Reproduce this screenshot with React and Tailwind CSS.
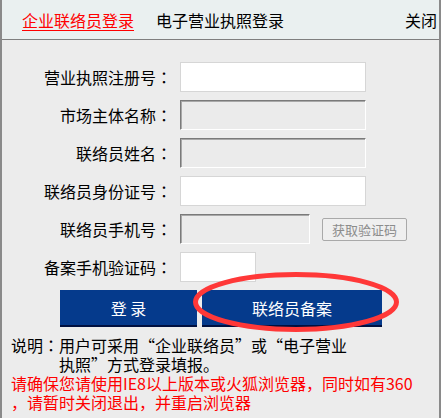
import React from "react";

const font = { fontFamily: '"Noto Sans CJK SC", "Liberation Sans", sans-serif' };
const colonFont = { fontFamily: '"Noto Sans CJK TC", "Noto Sans CJK SC", sans-serif' };

const rows = [
  { label: "营业执照注册号", w: "w-[186px]", disabled: false },
  { label: "市场主体名称", w: "w-[186px]", disabled: true },
  { label: "联络员姓名", w: "w-[186px]", disabled: true },
  { label: "联络员身份证号", w: "w-[186px]", disabled: false },
  { label: "联络员手机号", w: "w-[130px]", disabled: true, code: true },
  { label: "备案手机验证码", w: "w-[76px]", disabled: false },
];

const App = () => {
  return (
    <div
      className="relative w-[441px] h-[418px] overflow-hidden bg-[#ececec] border-l-2 border-r-2 border-[#8a8a8a] text-black"
      style={font}
    >
      {/* ================= HEADER ================= */}
      <div className="h-[40px] flex items-center bg-[#eaf0f0] border-b border-[#7f7f7f] text-[16px] pl-[20px] pr-[2px]">
        <span className="text-[#ff0000] underline underline-offset-[3px]">企业联络员登录</span>
        <span className="ml-[22px]">电子营业执照登录</span>
        <span className="ml-auto">关闭</span>
      </div>

      {/* ================= FORM ================= */}
      <div className="flex flex-col gap-[8px] pt-[22px]">
        {rows.map((r) => (
          <div key={r.label} className="flex items-center h-[30px]">
            <label className="w-[170px] text-right text-[16px]">
              {r.label}
              <span style={colonFont}>：</span>
            </label>
            <div
              className={
                r.disabled
                  ? `ml-[8px] ${r.w} h-[30px] bg-[#ebebeb] border border-t-[#7a7a7a] border-l-[#7a7a7a] border-r-white border-b-white shadow-[inset_1px_1px_0_#a8a8a8]`
                  : `ml-[8px] ${r.w} h-[30px] bg-white border border-[#d6d6d6]`
              }
            />
            {r.code && (
              <button className="ml-[12px] w-[85px] h-[23px] bg-[#efefef] border border-[#a9a9a9] rounded-[2px] text-[13px] text-[#8c8c8c] leading-none">
                获取验证码
              </button>
            )}
          </div>
        ))}
      </div>

      {/* ================= BUTTONS ================= */}
      <div className="flex gap-[5px] pl-[58px] mt-[8px]">
        <button className="w-[137px] h-[37px] bg-[#053a8c] border-b-2 border-[#001040] text-white text-[16px]">
          登 录
        </button>
        <button className="w-[180px] h-[37px] bg-[#053a8c] border-b-2 border-[#001040] text-white text-[16px]">
          联络员备案
        </button>
      </div>

      {/* ================= NOTES ================= */}
      <div className="pl-[9px] mt-[9px] text-[16px] leading-[19px]">
        <div className="flex">
          <span className="shrink-0">
            说明<span style={colonFont}>：</span>
          </span>
          <span className="w-[292px]">用户可采用“企业联络员”或“电子营业执照”方式登录填报。</span>
        </div>
        <div className="text-[#ff0000]">
          <div>请确保您请使用IE8以上版本或火狐浏览器，同时如有360</div>
          <div>，请暂时关闭退出，并重启浏览器</div>
        </div>
      </div>

      {/* ================= HIGHLIGHT ELLIPSE ================= */}
      <svg
        className="absolute left-[190px] top-[270px] pointer-events-none"
        width="212"
        height="66"
        viewBox="0 0 212 66"
      >
        <ellipse cx="104" cy="32" rx="100.5" ry="27.5" fill="none" stroke="#ff3838" strokeWidth="5" />
      </svg>
    </div>
  );
};

export default App;
